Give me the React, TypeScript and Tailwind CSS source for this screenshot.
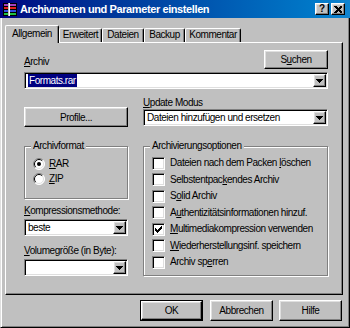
import React from "react";

const raised =
  "border border-t-white border-l-white border-r-black border-b-black shadow-[inset_-1px_-1px_0_#808080,inset_1px_1px_0_#dfdfdf]";
const sunken =
  "border border-t-[#808080] border-l-[#808080] border-r-white border-b-white shadow-[inset_1px_1px_0_#000,inset_-1px_-1px_0_#dfdfdf]";

function Arrow() {
  return (
    <svg width="7" height="4" shapeRendering="crispEdges">
      <rect x="0" y="0" width="7" height="1" fill="#000" />
      <rect x="1" y="1" width="5" height="1" fill="#000" />
      <rect x="2" y="2" width="3" height="1" fill="#000" />
      <rect x="3" y="3" width="1" height="1" fill="#000" />
    </svg>
  );
}

function Combo({ children, className = "" }: { children?: React.ReactNode; className?: string }) {
  return (
    <div className={`${sunken} bg-white h-[17px] flex items-stretch p-[1px] ${className}`}>
      <div className="flex-1 flex items-center pl-[2px] overflow-hidden whitespace-nowrap leading-none">
        {children}
      </div>
      <div className={`${raised} w-[13px] bg-[#c0c0c0] flex items-center justify-center`}>
        <Arrow />
      </div>
    </div>
  );
}

function Check({ checked }: { checked?: boolean }) {
  return (
    <div className={`${sunken} bg-white w-[13px] h-[13px] flex items-center justify-center shrink-0`}>
      {checked && (
        <svg width="7" height="7" shapeRendering="crispEdges">
          <path
            d="M6 0h1v3h-1zM5 1h1v3h-1zM4 2h1v3h-1zM3 3h1v3h-1zM2 4h1v3h-1zM1 3h1v3h-1zM0 2h1v3h-1z"
            fill="#000"
          />
        </svg>
      )}
    </div>
  );
}

function Radio({ checked }: { checked?: boolean }) {
  return (
    <svg width="12" height="12" className="shrink-0">
      <circle cx="6" cy="6" r="5.5" fill="#fff" />
      <path d="M2.1 9.9 A5.5 5.5 0 0 1 9.9 2.1" stroke="#808080" fill="none" />
      <path d="M9.9 2.1 A5.5 5.5 0 0 1 2.1 9.9" stroke="#fff" fill="none" />
      <path d="M2.8 9.2 A4.5 4.5 0 0 1 9.2 2.8" stroke="#000" fill="none" />
      <path d="M9.2 2.8 A4.5 4.5 0 0 1 2.8 9.2" stroke="#dfdfdf" fill="none" />
      {checked && <circle cx="6" cy="6" r="2" fill="#000" />}
    </svg>
  );
}

function U({ children }: { children: React.ReactNode }) {
  return <span className="underline underline-offset-[1px]">{children}</span>;
}

function CheckRow({ checked, children }: { checked?: boolean; children: React.ReactNode }) {
  return (
    <div className="h-[16.5px] flex items-center gap-[5px] pl-[8px]">
      <Check checked={checked} />
      <span className="leading-none whitespace-nowrap">{children}</span>
    </div>
  );
}

const groupCls =
  "border border-[#808080] shadow-[inset_1px_1px_0_#fff,1px_1px_0_#fff] m-0 p-0";
const legendCls = "ml-[6px] px-[2px] leading-[12px] bg-[#c0c0c0] relative whitespace-nowrap";

function Tab({ label, w, active }: { label: string; w: string; active?: boolean }) {
  if (active) {
    return (
      <div
        className={`${w} h-[18px] -mb-[1px] relative z-10 bg-[#c0c0c0] border-l border-t border-r border-l-white border-t-white border-r-black rounded-t-[2px] shadow-[inset_-1px_0_0_#808080] flex items-start justify-center pt-[2px] leading-[12px] whitespace-nowrap`}
      >
        {label}
      </div>
    );
  }
  return (
    <div
      className={`${w} h-[14px] bg-[#c0c0c0] border-l border-t border-r border-l-white border-t-white border-r-black rounded-t-[2px] shadow-[inset_-1px_0_0_#808080] flex items-start justify-center pt-[0px] leading-[12px] whitespace-nowrap`}
    >
      {label}
    </div>
  );
}

function Btn({ children, className = "", def }: { children: React.ReactNode; className?: string; def?: boolean }) {
  if (def) {
    return (
      <div className={`border border-black ${className}`}>
        <div className={`${raised} w-full h-full flex items-center justify-center bg-[#c0c0c0]`}>{children}</div>
      </div>
    );
  }
  return (
    <div className={`${raised} flex items-center justify-center bg-[#c0c0c0] whitespace-nowrap ${className}`}>{children}</div>
  );
}

export default function App() {
  return (
    <div className="w-[350px] h-[328px] bg-[#c0c0c0] flex flex-col font-['Liberation_Sans',Arial,sans-serif] text-[10px] tracking-[-0.45px] text-black select-none">
      {/* Title bar */}
      <div className="h-[18px] bg-linear-to-r from-[#000080] to-[#1084d0] flex items-center pl-[3px] pr-[5px] shrink-0">
        <svg width="14" height="13" shapeRendering="crispEdges" className="shrink-0">
          <rect x="0" y="0" width="14" height="13" fill="#000" />
          <rect x="1" y="1" width="12" height="2" fill="#a040c0" />
          <rect x="1" y="4" width="12" height="2" fill="#e02020" />
          <rect x="1" y="7" width="12" height="2" fill="#3050e0" />
          <rect x="1" y="10" width="12" height="2" fill="#20c040" />
          <rect x="5" y="0" width="2" height="13" fill="#fff" />
          <rect x="5" y="0" width="1" height="13" fill="#c0c0c0" />
        </svg>
        <span className="ml-[3px] text-white font-bold text-[11px] leading-none tracking-[-0.4px] whitespace-nowrap">
          Archivnamen und Parameter einstellen
        </span>
        <div className="ml-auto flex gap-[2px] tracking-normal">
          <div className={`${raised} w-[14px] h-[12px] bg-[#c0c0c0] flex items-center justify-center font-bold text-[10px] leading-none`}>
            ?
          </div>
          <div className={`${raised} w-[14px] h-[12px] bg-[#c0c0c0] flex items-center justify-center`}>
            <svg width="8" height="7" shapeRendering="crispEdges">
              <path d="M0 0h2l2 2 2-2h2v1l-2.5 2.5 2.5 2.5v1h-2l-2-2-2 2h-2v-1l2.5-2.5-2.5-2.5z" fill="#000" />
            </svg>
          </div>
        </div>
      </div>

      {/* Body */}
      <div className="flex-1 flex flex-col border-l border-r border-b border-l-[#dfdfdf] border-r-black border-b-black shadow-[inset_1px_0_0_#fff,inset_-1px_-1px_0_#808080] pl-[4px] pt-[7px]">
        {/* Tabs */}
        <div className="flex items-end h-[17px]">
          <Tab label="Allgemein" w="w-[54px]" active />
          <Tab label="Erweitert" w="w-[43px]" />
          <Tab label="Dateien" w="w-[42px]" />
          <Tab label="Backup" w="w-[41px]" />
          <Tab label="Kommentar" w="w-[56px]" />
        </div>

        {/* Panel */}
        <div className="w-[338px] h-[253px] border border-t-white border-l-white border-r-black border-b-black shadow-[inset_-1px_-1px_0_#808080] pl-[18px] pr-[14px] pt-[7px] flex flex-col">
          <div className="flex items-end justify-between h-[19px]">
            <span className="leading-[12px] mb-[1px]">
              <U>A</U>rchiv
            </span>
            <Btn className="w-[64px] h-[19px]">
              S<U>u</U>chen
            </Btn>
          </div>
          <Combo className="mt-[3px]">
            <span className="bg-[#000080] text-white px-[1px] leading-[13px]">Formats.rar</span>
          </Combo>

          <div className="grid grid-cols-[104px_185px] gap-x-[15px] mt-[8px]">
            <div className="flex items-end">
              <Btn className="w-[104px] h-[20px] mb-[-1px]">Profile...</Btn>
            </div>
            <div className="flex flex-col">
              <span className="leading-[12px]">
                <U>U</U>pdate Modus
              </span>
              <Combo>Dateien hinzufügen und ersetzen</Combo>
            </div>
          </div>

          <div className="grid grid-cols-[104px_185px] gap-x-[15px] mt-[14px]">
            <div className="flex flex-col">
              <fieldset className={`${groupCls} h-[59px]`}>
                <legend className={legendCls}>Archivformat</legend>
                <div className="flex flex-col pl-[8px] pt-[4px]">
                  <div className="h-[15px] flex items-center gap-[4px]">
                    <Radio checked />
                    <span className="leading-none">
                      <U>R</U>AR
                    </span>
                  </div>
                  <div className="h-[15px] flex items-center gap-[4px]">
                    <Radio />
                    <span className="leading-none">
                      <U>Z</U>IP
                    </span>
                  </div>
                </div>
              </fieldset>
              <span className="leading-[12px] mt-[6px] whitespace-nowrap">
                <U>K</U>ompressionsmethode:
              </span>
              <Combo className="mt-[2px]">beste</Combo>
              <span className="leading-[12px] mt-[9px] whitespace-nowrap">
                <U>V</U>olumegröße (in Byte):
              </span>
              <Combo className="mt-[2px]" />
            </div>
            <fieldset className={`${groupCls} h-[136px]`}>
              <legend className={legendCls}>Archivierungsoptionen</legend>
              <div className="flex flex-col pt-[3px]">
                <CheckRow>
                  Dateien nach dem Packen <U>l</U>öschen
                </CheckRow>
                <CheckRow>
                  Selbstentpac<U>k</U>endes Archiv
                </CheckRow>
                <CheckRow>
                  S<U>o</U>lid Archiv
                </CheckRow>
                <CheckRow>
                  A<U>u</U>thentizitätsinformationen hinzuf.
                </CheckRow>
                <CheckRow checked>
                  <U>M</U>ultimediakompression verwenden
                </CheckRow>
                <CheckRow>
                  <U>W</U>iederherstellungsinf. speichern
                </CheckRow>
                <CheckRow>
                  Archiv sp<U>e</U>rren
                </CheckRow>
              </div>
            </fieldset>
          </div>
        </div>

        {/* Buttons */}
        <div className="flex justify-end gap-[6px] mt-[5px] pr-[7px]">
          <Btn def className="w-[63px] h-[21px]">
            OK
          </Btn>
          <Btn className="w-[63px] h-[21px] ml-[1px]">Abbrechen</Btn>
          <Btn className="w-[63px] h-[21px]">Hilfe</Btn>
        </div>
      </div>
    </div>
  );
}
